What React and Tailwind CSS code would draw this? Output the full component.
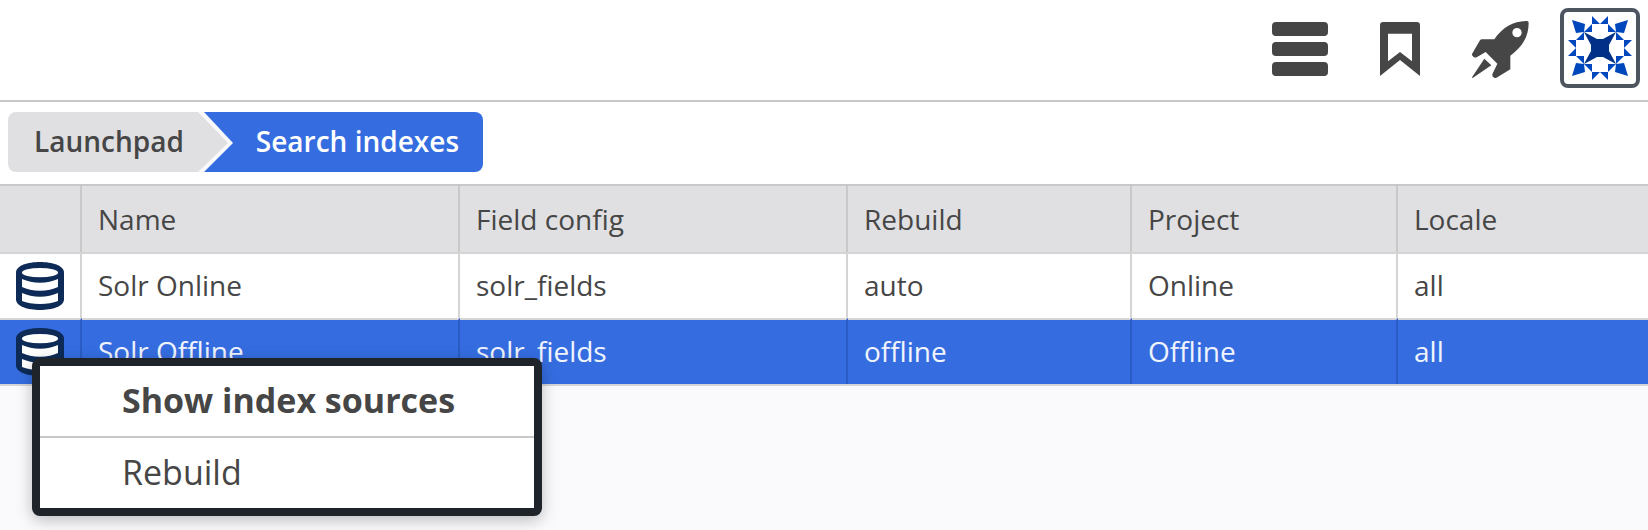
const columns = ["Name", "Field config", "Rebuild", "Project", "Locale"];

const rows = [
  { cells: ["Solr Online", "solr_fields", "auto", "Online", "all"], selected: false },
  { cells: ["Solr Offline", "solr_fields", "offline", "Offline", "all"], selected: true },
];

function BarsIcon() {
  return (
    <svg className="h-[54px] w-14" viewBox="0 0 56 54" fill="#464646" aria-hidden="true">
      <rect width="56" height="14" rx="4" />
      <rect y="20" width="56" height="14" rx="4" />
      <rect y="40" width="56" height="14" rx="4" />
    </svg>
  );
}

function BookmarkIcon() {
  return (
    <svg className="h-[54px] w-10" viewBox="0 0 120 162" fill="#464646" aria-hidden="true">
      <path
        fillRule="evenodd"
        d="M10 0H110Q120 0 120 10V162L60 114L0 162V10Q0 0 10 0ZM24 35V118L60 90L96 118V35Z"
      />
    </svg>
  );
}

function RocketIcon() {
  return (
    <svg className="size-[66px]" viewBox="-3 0 198 198" fill="#464646" aria-hidden="true">
      <path
        fillRule="evenodd"
        d="M177 15Q182 15 182 20C182 60 165 92 127 119V160L88 184Q83 187 79 185Q72 182 73 175L88 143L53 108L26 124Q21 126 17 123Q11 119 12 114L35 74Q38 70 42 70H79C104 33 137 15 177 15ZM147 36A14 14 0 1 0 147 64A14 14 0 1 0 147 36Z"
      />
      <path d="M12 184L49 128L70 148L14 186Z" />
    </svg>
  );
}

function IdenticonQuarter({ angle }) {
  return (
    <g transform={`rotate(${angle} 32 32)`}>
      <path d="M4 4L17 8L16 16L8 17Z" />
      <path d="M24 0V8H32Z" />
      <path d="M40 0V8H32Z" />
      <path d="M16 16H24V8Z" />
      <path d="M48 16H40V8Z" />
    </g>
  );
}

function Identicon() {
  return (
    <svg className="size-16" viewBox="0 0 64 64" fill="#0046bd" aria-hidden="true">
      {[0, 90, 180, 270].map((angle) => (
        <IdenticonQuarter key={angle} angle={angle} />
      ))}
      <path
        fill="#003087"
        d="M16 16L29 23H35L48 16L41 29V35L48 48L35 41H29L16 48L23 35V29Z"
      />
    </svg>
  );
}

function DatabaseIcon() {
  return (
    <svg className="mx-auto size-12" viewBox="0 0 144 144" aria-hidden="true">
      <path
        fill="#0d2b56"
        d="M0 32C0 10 36 0 72 0S144 10 144 32V112C144 134 108 144 72 144S0 134 0 112Z"
      />
      <g fill="#fff">
        <ellipse cx="72" cy="32" rx="54" ry="14" />
        <path d="M18 51Q42 62 72 62T126 51V75Q104 86 72 86T18 75Z" />
        <path d="M18 93Q42 104 72 104T126 93V117Q104 126 72 126T18 117Z" />
      </g>
    </svg>
  );
}

function HeaderButton({ label, children }) {
  return (
    <button
      type="button"
      aria-label={label}
      className="flex h-20 w-20 items-center justify-center pt-0.5"
    >
      {children}
    </button>
  );
}

function Breadcrumb() {
  return (
    <nav aria-label="Breadcrumb" className="border-b-2 border-[#c8c8c8] bg-white px-2 pt-[10px] pb-3">
      <ol className="flex h-[60px] text-[28px] leading-[58px] font-semibold">
        <li className="flex">
          <a href="#launchpad" className="rounded-l-lg bg-[#e0e0e2] pr-[11px] pl-[26px]">
            Launchpad
          </a>
          <svg className="h-[60px] w-10" viewBox="0 0 40 60" aria-hidden="true">
            <rect width="40" height="60" fill="#356de0" />
            <path d="M0 0H9L38 31L9 60H0Z" fill="#fafafc" />
            <path d="M0 0H3L33 31L3 60H0Z" fill="#e0e0e2" />
          </svg>
        </li>
        <li className="flex">
          <a
            href="#search-indexes"
            aria-current="page"
            className="rounded-r-lg bg-[#356de0] pr-6 pl-[21px] text-white"
          >
            Search indexes
          </a>
        </li>
      </ol>
    </nav>
  );
}

function IndexTable() {
  return (
    <table className="w-full table-fixed border-separate border-spacing-0 border-b-2 border-[#d5d5d5] text-left text-[28px] leading-8">
      <colgroup>
        <col className="w-[82px]" />
        <col className="w-[378px]" />
        <col className="w-[388px]" />
        <col className="w-[284px]" />
        <col className="w-[266px]" />
        <col />
      </colgroup>
      <thead className="bg-[#e0e0e2]">
        <tr className="h-[66px]">
          <th aria-label="Type" className="border-r-2 border-[#c8c8c8]" />
          {columns.map((name) => (
            <th
              key={name}
              scope="col"
              className="border-r-2 border-[#c8c8c8] px-4 py-0 font-normal last:border-r-0"
            >
              {name}
            </th>
          ))}
        </tr>
      </thead>
      <tbody>
        {rows.map(({ cells, selected }) => {
          const cell = selected
            ? "border-t-2 border-r-2 border-t-[#d5d5d5] border-r-[#2a5dc6] last:border-r-0"
            : "border-t-2 border-r-2 border-[#d5d5d5] last:border-r-0";
          return (
            <tr
              key={cells[0]}
              aria-selected={selected}
              className={selected ? "h-[66px] bg-[#356de0] text-[#f0f4fd]" : "h-[66px] bg-white"}
            >
              <td className={`${cell} p-0`}>
                <DatabaseIcon />
              </td>
              {cells.map((text, i) => (
                <td key={columns[i]} className={`${cell} px-4 pt-0 pb-0.5`}>
                  {text}
                </td>
              ))}
            </tr>
          );
        })}
      </tbody>
    </table>
  );
}

function ContextMenu() {
  return (
    <div
      role="menu"
      className="absolute top-[172px] left-8 flex w-[510px] flex-col rounded-lg border-8 border-[#1f242b] bg-white text-[34px] leading-[68px] shadow-[0_4px_16px_rgba(0,0,0,0.25)]"
    >
      <button
        type="button"
        role="menuitem"
        className="border-b-2 border-[#c8c8c8] pb-0.5 pl-[82px] text-left font-bold"
      >
        Show index sources
      </button>
      <button type="button" role="menuitem" className="pb-0.5 pl-[82px] text-left">
        Rebuild
      </button>
    </div>
  );
}

export default function App() {
  return (
    <div className="min-h-screen bg-[#fafafc] font-['Open_Sans',sans-serif] text-[#464646]">
      <header className="flex justify-end gap-5 border-b-2 border-[#c8c8c8] bg-white px-2 pt-2 pb-3">
        <HeaderButton label="Menu">
          <BarsIcon />
        </HeaderButton>
        <HeaderButton label="Bookmarks">
          <BookmarkIcon />
        </HeaderButton>
        <HeaderButton label="Launchpad">
          <RocketIcon />
        </HeaderButton>
        <button
          type="button"
          aria-label="User"
          className="flex size-20 items-center justify-center rounded-lg border-4 border-[#4d555f] bg-white"
        >
          <Identicon />
        </button>
      </header>
      <Breadcrumb />
      <main className="relative">
        <IndexTable />
        <ContextMenu />
      </main>
    </div>
  );
}
